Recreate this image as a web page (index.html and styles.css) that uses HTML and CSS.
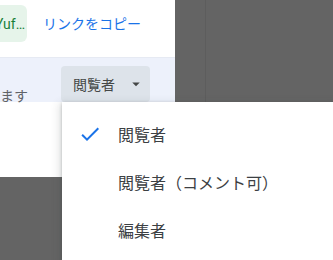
FILE: index.html
```html
<!DOCTYPE html>
<html lang="ja">
<head>
    <meta charset="UTF-8">
    <meta name="viewport" content="width=device-width, initial-scale=1.0">
    <title>共有</title>
    <link rel="stylesheet" href="styles.css">
</head>
<body>

    <div class="backdrop">
        <!-- Panel de compartir, recortado por la ventana -->
        <section class="share-panel">
            <div class="link-row">
                <span class="url-chip"><span class="url-text">docs.google.com/d/1kQYuf…</span></span>
                <a class="copy-link" href="#">リンクをコピー</a>
            </div>
            <div class="access-row">
                <span class="access-note">ます</span>
                <button class="role-btn" type="button">
                    閲覧者
                    <svg class="drop-icon" viewBox="0 0 24 24" width="18" height="18"><path d="M7 10l5 5 5-5z"/></svg>
                </button>
            </div>
        </section>
        <div class="gutter-line"></div>
    </div>

    <!-- Menú desplegable que queda encima de todo -->
    <ul class="role-menu">
        <li class="role-item is-selected">
            <svg class="check-icon" viewBox="0 0 24 24" width="24" height="24"><path d="M9 16.17L4.83 12l-1.42 1.41L9 19 21 7l-1.41-1.41z"/></svg>
            <span>閲覧者</span>
        </li>
        <li class="role-item">
            <span class="check-space"></span>
            <span>閲覧者（コメント可）</span>
        </li>
        <li class="role-item">
            <span class="check-space"></span>
            <span>編集者</span>
        </li>
    </ul>

</body>
</html>
```

FILE: styles.css
```css
/* Estilos generales */
html, body {
    margin: 0;
    height: 260px;
    overflow: hidden;
}

body {
    position: relative;
    background-color: #646464;
    font-family: "Noto Sans CJK JP", Roboto, sans-serif;
    color: #3c4043;
}

.backdrop {
    display: flex;
    align-items: flex-start;
    height: 260px;
}

.share-panel {
    width: 175px;
    height: 177px;
    background: #fff;
    flex-shrink: 0;
}

.gutter-line {
    width: 1px;
    height: 260px;
    margin-left: 30px;
    background: #5d5d5d;
}

/* Fila con la URL y el enlace */
.link-row {
    display: flex;
    align-items: flex-start;
    gap: 16px;
    height: 58px;
    padding-top: 5px;
    box-sizing: border-box;
    border-bottom: 1px solid #e6eaf3;
}

.url-chip {
    display: flex;
    justify-content: flex-end;
    align-items: center;
    width: 27px;
    height: 37px;
    padding-right: 2px;
    box-sizing: border-box;
    overflow: hidden;
    background: #e6f4ea;
    border-radius: 0 6px 6px 0;
    flex-shrink: 0;
}

.url-text {
    white-space: nowrap;
    font-family: Roboto, sans-serif;
    font-size: 14px;
    color: #188038;
}

.copy-link {
    line-height: 37px;
    font-size: 14px;
    color: #1a73e8;
    text-decoration: none;
}

/* Fila de acceso (resaltada) */
.access-row {
    display: flex;
    align-items: flex-start;
    height: 44px;
    padding-top: 8px;
    box-sizing: border-box;
    background: #edf1fb;
}

.access-note {
    width: 61px;
    margin-top: 19px;
    line-height: 20px;
    font-size: 14px;
    color: #5f6368;
    flex-shrink: 0;
}

.role-btn {
    display: flex;
    align-items: center;
    gap: 12px;
    height: 36px;
    padding: 0 5px 0 12px;
    border: none;
    border-radius: 4px;
    background: #dde3ea;
    font-family: inherit;
    font-size: 14px;
    line-height: 20px;
    color: #444746;
}

.drop-icon { fill: #444746; }

/* Menú de roles */
.role-menu {
    position: absolute;
    left: 62px;
    top: 102px;
    width: 271px;
    height: 158px;
    box-sizing: border-box;
    margin: 0;
    padding: 8px 0 0;
    list-style: none;
    background: #fff;
    box-shadow: 0 4px 8px 3px rgba(60, 64, 67, 0.15), 0 1px 3px rgba(60, 64, 67, 0.3);
}

.role-item {
    display: flex;
    align-items: center;
    gap: 16px;
    height: 48px;
    padding-left: 16px;
    font-size: 16px;
    line-height: 20px;
    color: #3c4043;
}

.check-icon { fill: #1a73e8; flex-shrink: 0; }
.check-space { width: 24px; flex-shrink: 0; }
```
